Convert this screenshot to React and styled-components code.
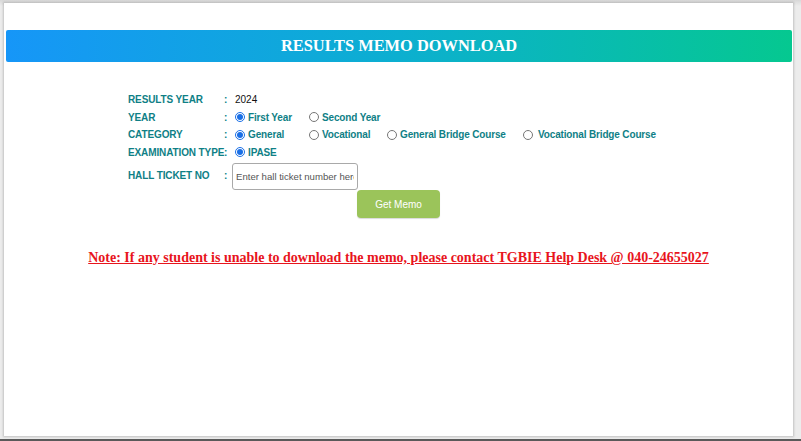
import React from "react";
import styled, { createGlobalStyle } from "styled-components";

const GlobalStyle = createGlobalStyle`
  html, body {
    margin: 0;
    padding: 0;
    height: 100%;
    background: #e6e6e6;
  }
  #root {
    height: 100%;
  }
`;

const Screen = styled.div`
  height: 441px;
  box-sizing: border-box;
  padding: 3px 8px 3px 4px;
  border-bottom: 2px solid #5a5a5a;
  background: linear-gradient(#d8d8d8, #ececec 6px);
`;

const Card = styled.div`
  height: 100%;
  background: #ffffff;
  box-shadow: 0 0 2px 1px rgba(0, 0, 0, 0.18);
  padding-top: 27px;
  box-sizing: border-box;
`;

const Header = styled.div`
  margin: 0 1px 0 2px;
  height: 32px;
  border-radius: 2px;
  background: linear-gradient(90deg, #1696f8 0%, #0cafd0 50%, #05c890 100%);
  display: flex;
  align-items: center;
  justify-content: center;
`;

const Title = styled.h1`
  margin: 0;
  color: #ffffff;
  font-family: "Liberation Serif", "Times New Roman", serif;
  font-weight: bold;
  font-size: 16.4px;
`;

const Form = styled.div`
  display: grid;
  grid-template-columns: 96px 11px auto;
  align-items: center;
  padding: 29px 0 0 124px;
  font-family: "Liberation Sans", Arial, sans-serif;
`;

const Label = styled.div`
  color: #0f7f86;
  font-weight: bold;
  font-size: 10px;
  letter-spacing: -0.12px;
  height: ${(p) => p.$h || 17.5}px;
  line-height: ${(p) => p.$h || 17.5}px;
  white-space: nowrap;
`;

const Colon = styled(Label)`
  letter-spacing: 0;
`;

const Value = styled.div`
  display: flex;
  align-items: center;
  height: ${(p) => p.$h || 17.5}px;
  font-size: 10px;
  color: #111;
`;

const Option = styled.label`
  display: inline-flex;
  align-items: center;
  width: ${(p) => (p.$w ? p.$w + "px" : "auto")};
  color: #0f7f86;
  font-weight: bold;
  font-size: 10px;
  letter-spacing: -0.15px;
  white-space: nowrap;
  gap: ${(p) => p.$gap || 3}px;
`;

const Radio = styled.input.attrs({ type: "radio" })`
  width: 10px;
  height: 10px;
  margin: 0;
  accent-color: #1a6fe6;
`;

const TicketInput = styled.input`
  box-sizing: border-box;
  width: 126px;
  height: 27px;
  margin-left: -3px;
  padding: 0 3px;
  border: 1px solid #a9a9a9;
  border-radius: 3px;
  font-family: "Liberation Sans", Arial, sans-serif;
  font-size: 9.6px;
  color: #333;
  &::placeholder {
    color: #555;
  }
`;

const ButtonRow = styled.div`
  display: flex;
  justify-content: center;
  margin-top: -1px;
`;

const MemoButton = styled.button`
  width: 83px;
  height: 28px;
  border: 0;
  border-radius: 4px;
  background: #9bc45a;
  color: #ffffff;
  font-family: "Liberation Sans", Arial, sans-serif;
  font-size: 10px;
  cursor: pointer;
  box-shadow: 0 1px 1px rgba(0, 0, 0, 0.15);
`;

const Note = styled.p`
  margin: 32px 0 0 0;
  text-align: center;
  color: #e8141c;
  font-family: "Liberation Serif", "Times New Roman", serif;
  font-weight: bold;
  font-size: 14px;
  text-decoration: underline;
`;

function Row({ label, children, h }) {
  return (
    <>
      <Label $h={h}>{label}</Label>
      <Colon $h={h}>:</Colon>
      <Value $h={h}>{children}</Value>
    </>
  );
}

export default function App() {
  return (
    <>
      <GlobalStyle />
      <Screen>
        <Card>
          <Header>
            <Title>RESULTS MEMO DOWNLOAD</Title>
          </Header>

          <Form>
            <Row label="RESULTS YEAR">2024</Row>
            <Row label="YEAR">
              <Option $w={74}>
                <Radio name="year" defaultChecked />
                First Year
              </Option>
              <Option>
                <Radio name="year" />
                Second Year
              </Option>
            </Row>
            <Row label="CATEGORY">
              <Option $w={74}>
                <Radio name="cat" defaultChecked />
                General
              </Option>
              <Option $w={78}>
                <Radio name="cat" />
                Vocational
              </Option>
              <Option $w={136}>
                <Radio name="cat" />
                General Bridge Course
              </Option>
              <Option $gap={5}>
                <Radio name="cat" />
                Vocational Bridge Course
              </Option>
            </Row>
            <Row label="EXAMINATION TYPE">
              <Option>
                <Radio name="type" defaultChecked />
                IPASE
              </Option>
            </Row>
            <Row label="HALL TICKET NO" h={30}>
              <TicketInput placeholder="Enter hall ticket number here" />
            </Row>
          </Form>

          <ButtonRow>
            <MemoButton>Get Memo</MemoButton>
          </ButtonRow>

          <Note>
            Note: If any student is unable to download the memo, please contact TGBIE Help Desk @ 040-24655027
          </Note>
        </Card>
      </Screen>
    </>
  );
}
